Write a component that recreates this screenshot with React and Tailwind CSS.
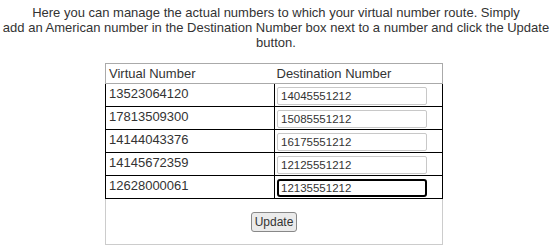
const rows = [
  { virtual: '13523064120', dest: '14045551212' },
  { virtual: '17813509300', dest: '15085551212' },
  { virtual: '14144043376', dest: '16175551212' },
  { virtual: '14145672359', dest: '12125551212' },
  { virtual: '12628000061', dest: '12135551212', focused: true },
];

export default function App() {
  return (
    <div className="w-[552px] h-[251px] bg-white text-[#333] font-['Liberation_Sans',Arial,sans-serif]">
      {/* Intro */}
      <p className="pt-[5px] text-center text-[13px] leading-[15px]">
        Here you can manage the actual numbers to which your virtual number route. Simply
        <br />
        add an American number in the Destination Number box next to a number and click the Update button.
      </p>

      {/* Number table */}
      <table className="mt-[13px] ml-[105px] w-[338px] border-collapse border-t border-l border-t-[#888] border-l-[#888] border-r border-b border-r-[#ccc] border-b-[#ccc] text-[13px] leading-[15px]">
        <thead>
          <tr>
            <th className="w-[169px] h-[20px] border-t border-b border-l border-[#aaa] px-[3px] text-left font-normal align-top pt-[2px]">
              Virtual Number
            </th>
            <th className="h-[20px] border-t border-b border-r border-[#aaa] pl-[2px] text-left font-normal align-top pt-[2px]">
              Destination Number
            </th>
          </tr>
        </thead>
        <tbody>
          {rows.map((r) => (
            <tr key={r.virtual}>
              <td className="h-[23px] border border-black px-[3px] align-top pt-[2px]">{r.virtual}</td>
              <td className="h-[23px] border border-black pl-[2px] align-top pt-[3px]">
                <input
                  type="text"
                  defaultValue={r.dest}
                  className={
                    r.focused
                      ? 'block w-[150px] h-[18px] rounded-[3px] border-2 border-black px-[2px] text-[11.5px] text-[#333] font-["Liberation_Sans",Arial,sans-serif] outline-none'
                      : 'block w-[150px] h-[18px] rounded-[2px] border border-[#c8c8c8] px-[3px] text-[11.5px] text-[#333] font-["Liberation_Sans",Arial,sans-serif] outline-none'
                  }
                />
              </td>
            </tr>
          ))}
          <tr>
            <td colSpan={2} className="h-[46px] border border-[#ccc] text-center align-top pt-[13px]">
              <button className="h-[20px] px-[3px] rounded-[3px] border border-[#888] bg-[#ebebeb] text-[12px] leading-[15px] text-[#333] font-['Liberation_Sans',Arial,sans-serif]">
                Update
              </button>
            </td>
          </tr>
        </tbody>
      </table>
    </div>
  );
}
